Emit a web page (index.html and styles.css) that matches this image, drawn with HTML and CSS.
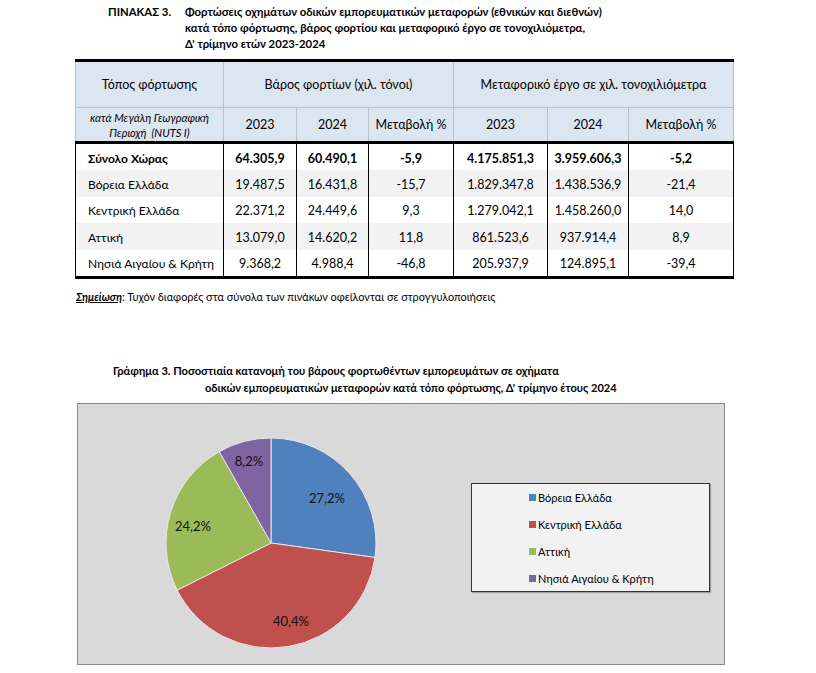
FILE: index.html
```html
<!DOCTYPE html>
<html lang="el">
<head>
<meta charset="utf-8">
<link rel="stylesheet" href="styles.css">
</head>
<body>
<div class="page">
  <div class="title">
    <div class="tlabel">ΠΙΝΑΚΑΣ 3.</div>
    <div class="ttext">Φορτώσεις οχημάτων οδικών εμπορευματικών μεταφορών (εθνικών και διεθνών)<br>κατά τόπο φόρτωσης, βάρος φορτίου και μεταφορικό έργο σε τονοχιλιόμετρα,<br>Δ' τρίμηνο ετών 2023-2024</div>
  </div>

  <table class="data">
    <colgroup>
      <col class="c1"><col class="c2"><col class="c3"><col class="c4"><col class="c5"><col class="c6"><col class="c7">
    </colgroup>
    <thead>
      <tr class="h1">
        <th>Τόπος φόρτωσης</th>
        <th colspan="3">Βάρος φορτίων (χιλ. τόνοι)</th>
        <th colspan="3">Μεταφορικό έργο σε χιλ. τονοχιλιόμετρα</th>
      </tr>
      <tr class="h2">
        <th class="sub">κατά Μεγάλη Γεωγραφική<br>Περιοχή &nbsp;(NUTS I)</th>
        <th>2023</th><th>2024</th><th>Μεταβολή %</th>
        <th>2023</th><th>2024</th><th>Μεταβολή %</th>
      </tr>
    </thead>
    <tbody>
      <tr class="total">
        <td class="name">Σύνολο Χώρας</td><td>64.305,9</td><td>60.490,1</td><td>-5,9</td><td>4.175.851,3</td><td>3.959.606,3</td><td>-5,2</td>
      </tr>
      <tr class="alt">
        <td class="name">Βόρεια Ελλάδα</td><td>19.487,5</td><td>16.431,8</td><td>-15,7</td><td>1.829.347,8</td><td>1.438.536,9</td><td>-21,4</td>
      </tr>
      <tr>
        <td class="name">Κεντρική Ελλάδα</td><td>22.371,2</td><td>24.449,6</td><td>9,3</td><td>1.279.042,1</td><td>1.458.260,0</td><td>14,0</td>
      </tr>
      <tr class="alt">
        <td class="name">Αττική</td><td>13.079,0</td><td>14.620,2</td><td>11,8</td><td>861.523,6</td><td>937.914,4</td><td>8,9</td>
      </tr>
      <tr class="last">
        <td class="name">Νησιά Αιγαίου &amp; Κρήτη</td><td>9.368,2</td><td>4.988,4</td><td>-46,8</td><td>205.937,9</td><td>124.895,1</td><td>-39,4</td>
      </tr>
    </tbody>
  </table>

  <p class="note"><span class="nlabel">Σημείωση</span>: Τυχόν διαφορές στα σύνολα των πινάκων οφείλονται σε στρογγυλοποιήσεις</p>

  <div class="chart-title">Γράφημα 3. Ποσοστιαία κατανομή του βάρους φορτωθέντων εμπορευμάτων σε οχήματα<br><span class="indent">οδικών εμπορευματικών μεταφορών κατά τόπο φόρτωσης, Δ' τρίμηνο έτους 2024</span></div>

  <div class="chart">
    <svg class="pie" width="393" height="260" viewBox="0 0 393 260">
      <g stroke="#e8e8e8" stroke-width="1" stroke-linejoin="round">
        <path fill="#4f81bd" d="M193,139 L193,34 A105,105 0 0 1 297.0,153.47 Z"/>
        <path fill="#c0504d" d="M193,139 L297.0,153.47 A105,105 0 0 1 99.15,186.08 Z"/>
        <path fill="#9bbb59" d="M193,139 L99.15,186.08 A105,105 0 0 1 141.27,47.63 Z"/>
        <path fill="#8064a2" d="M193,139 L141.27,47.63 A105,105 0 0 1 193,34 Z"/>
      </g>
      <g class="plabels" text-anchor="middle">
        <text x="249" y="99">27,2%</text>
        <text x="213" y="222">40,4%</text>
        <text x="115" y="127">24,2%</text>
        <text x="171" y="62">8,2%</text>
      </g>
    </svg>
    <div class="legend">
      <div class="item"><span class="sw blue"></span>Βόρεια Ελλάδα</div>
      <div class="item"><span class="sw red"></span>Κεντρική Ελλάδα</div>
      <div class="item"><span class="sw green"></span>Αττική</div>
      <div class="item"><span class="sw purple"></span>Νησιά Αιγαίου &amp; Κρήτη</div>
    </div>
  </div>
</div>
</body>
</html>
```

FILE: styles.css
```css
html, body {
  margin: 0;
  padding: 0;
  background: #fff;
}
body {
  font-family: Lato, "Open Sans", "Noto Sans", sans-serif;
  color: #000;
}
.page {
  padding-top: 4px;
}
.title {
  display: flex;
  margin-left: 108px;
  font-weight: bold;
  font-size: 11.3px;
  line-height: 16px;
}
.tlabel {
  width: 77px;
  flex: none;
}

.data {
  margin: 7px 0 0 75px;
  border-collapse: collapse;
  table-layout: fixed;
  width: 658px;
  font-size: 12.5px;
}
.c1 { width: 148px; }
.c2 { width: 73px; }
.c3 { width: 72px; }
.c4 { width: 85px; }
.c5 { width: 94px; }
.c6 { width: 81px; }
.c7 { width: 105px; }

.data th {
  background: #dce6f1;
  font-weight: normal;
  border: 1px solid #b9c0c9;
  padding: 0;
  text-align: center;
}
.data .h1 th {
  height: 45px;
  border-top: 3px solid #000;
}
.data .h2 th {
  height: 33px;
  border-bottom: 3px solid #000;
}
.data .h2 th.sub {
  font-style: italic;
  font-size: 11px;
  line-height: 15px;
}
.data td {
  height: 24.4px;
  padding: 2px 0 0;
  text-align: center;
  border-left: 1px solid #000;
  border-right: 1px solid #000;
}
.data td.name {
  text-align: left;
  padding-left: 12px;
  font-size: 12px;
}
.data tr.total td {
  font-weight: bold;
}
.data tr.alt td {
  background: #f2f2f2;
}
.data tr.last td {
  border-bottom: 3px solid #000;
}

.note {
  margin: 11px 0 0 76px;
  font-size: 10.9px;
  line-height: 14px;
}
.nlabel {
  font-weight: bold;
  font-style: italic;
  text-decoration: underline;
}

.chart-title {
  margin: 58px 0 0 113px;
  font-weight: bold;
  font-size: 11.1px;
  line-height: 17px;
}
.indent {
  padding-left: 92px;
}

.chart {
  margin: 7px 0 0 77px;
  width: 646px;
  height: 260px;
  background: #d9d9d9;
  border: 1px solid #8c8c8c;
  display: flex;
  align-items: flex-start;
}
.pie {
  display: block;
  flex: none;
}
.plabels text {
  font-family: Lato, "Open Sans", sans-serif;
  font-size: 13px;
  fill: #111;
}
.legend {
  margin-top: 79px;
  width: 180px;
  height: 107px;
  padding-left: 57px;
  background: #f2f2f2;
  border: 1px solid #333;
  box-shadow: 1px 1px 1px rgba(0,0,0,0.25);
  display: flex;
  flex-direction: column;
  font-size: 11px;
  line-height: 27px;
}
.item {
  display: flex;
  align-items: center;
  gap: 2px;
}
.sw {
  width: 7px;
  height: 7px;
  flex: none;
}
.sw.blue { background: #4f81bd; }
.sw.red { background: #c0504d; }
.sw.green { background: #9bbb59; }
.sw.purple { background: #8064a2; }
```
